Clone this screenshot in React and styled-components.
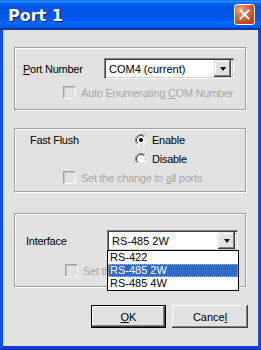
import React from 'react';
import styled, { createGlobalStyle } from 'styled-components';

const Global = createGlobalStyle`
  html, body { margin: 0; padding: 0; }
  body {
    width: 261px; height: 350px; overflow: hidden;
    font-family: "Liberation Sans", Arial, sans-serif;
    font-size: 11px; color: #000;
  }
`;

const FACE = '#e2e2e2';

const Window = styled.div`
  width: 261px; height: 350px; box-sizing: border-box;
  display: flex; flex-direction: column;
`;

const TitleBar = styled.div`
  height: 30px; flex: none; display: flex; align-items: center;
  justify-content: space-between; padding: 0 6px 0 8px; box-sizing: border-box;
  background: linear-gradient(to bottom,
    #0058ee 0%, #3593ff 4%, #288eff 6%, #127dff 8%, #036ffc 10%,
    #0262ee 14%, #0057e5 20%, #0054e3 24%, #0055eb 56%, #005bf5 66%,
    #026afe 76%, #0062ef 86%, #0052d6 92%, #0040ab 94%, #003092 100%);
`;

const Title = styled.div`
  font-family: "DejaVu Sans", sans-serif; font-weight: bold; font-size: 16px;
  color: #fff; text-shadow: 1px 1px 0 #0a1883; margin-top: 1px;
`;

const CloseButton = styled.div`
  width: 21px; height: 21px; box-sizing: border-box; border: 1px solid #fff;
  border-radius: 3px; display: flex; align-items: center; justify-content: center;
  background: radial-gradient(circle at 30% 25%, #f0a080 0%, #e06a45 35%, #cc4418 75%, #b83a10 100%);
  margin-top: -1px;
`;

const Frame = styled.div`
  flex: 1; display: flex; padding: 0 3px 4px 3px;
  background: linear-gradient(to right, #0a3fd7 0, #1660ea 1px, #0a3fd7 3px, #0a3fd7 calc(100% - 3px), #1660ea calc(100% - 2px), #0a2fb0 100%);
  box-shadow: inset 0 -1px 0 #0a2fb0;
`;

const Client = styled.div`
  flex: 1; background: ${FACE}; display: flex; flex-direction: column;
  padding: 17px 12px 0 11px;
`;

const Group = styled.div`
  box-sizing: border-box; height: ${p => p.$h}px; margin-top: ${p => p.$mt || 0}px;
  border: 1px solid #a0a0a0; box-shadow: inset 1px 1px 0 #fff, 1px 1px 0 #fff;
  display: flex; flex-direction: column;
  padding: ${p => p.$pt}px 0 0 ${p => p.$pl}px;
  position: relative;
`;

const Row = styled.div`
  display: flex; align-items: center; height: ${p => p.$h || 13}px;
  margin-top: ${p => p.$mt || 0}px; margin-left: ${p => p.$ml || 0}px;
`;

const Label = styled.div`
  width: ${p => (p.$w ? `${p.$w}px` : 'auto')}; flex: none; white-space: nowrap;
  letter-spacing: -0.25px;
  overflow: ${p => (p.$clip ? 'hidden' : 'visible')};
  color: ${p => (p.$disabled ? '#a8a8a8' : '#000')};
`;

const U = styled.span` text-decoration: underline; `;

const Combo = styled.div`
  position: relative; width: ${p => p.$w}px; height: 21px; box-sizing: border-box;
  background: #fff; display: flex; align-items: center;
  border-top: 1px solid #808080; border-left: 1px solid #808080;
  border-right: 1px solid #fff; border-bottom: 1px solid #fff;
  box-shadow: inset 1px 1px 0 #404040, inset -1px -1px 0 #d4d0c8;
  padding: 2px;
`;

const ComboText = styled.div`
  flex: 1; padding-left: 2px; font-size: 11px; white-space: nowrap;
`;

const ComboButton = styled.div`
  width: 17px; height: 17px; box-sizing: border-box; flex: none;
  background: ${FACE}; display: flex; align-items: center; justify-content: center;
  box-shadow: inset -1px -1px 0 #404040, inset 1px 1px 0 ${FACE}, inset -2px -2px 0 #808080, inset 2px 2px 0 #fff;
`;

const Arrow = styled.div`
  width: 0; height: 0; border-left: 3.5px solid transparent; border-right: 3.5px solid transparent;
  border-top: 4px solid #000; margin-top: 1px;
`;

const DropList = styled.div`
  position: absolute; top: 100%; left: -1px; width: 132px; box-sizing: border-box;
  border: 1px solid #000; background: #fff; z-index: 5;
`;

const ListItem = styled.div`
  height: 13px; line-height: 13px; padding-left: 2px; font-size: 11px; box-sizing: border-box;
  background: ${p => (p.$sel ? '#316ac5' : '#fff')};
  color: ${p => (p.$sel ? '#fff' : '#000')};
  outline: ${p => (p.$sel ? '1px dotted #e8d070' : 'none')};
  outline-offset: -1px;
`;

const CheckBox = styled.div`
  width: 13px; height: 13px; box-sizing: border-box; flex: none; margin-right: 5px;
  background: ${FACE};
  border-top: 1px solid #a0a0a0; border-left: 1px solid #a0a0a0;
  border-right: 1px solid #fff; border-bottom: 1px solid #fff;
  box-shadow: inset 1px 1px 0 #c4c4c4;
`;

const Radio = ({ checked }) => (
  <svg width="12" height="12" viewBox="0 0 12 12" style={{ flex: 'none', marginRight: 5 }}>
    <circle cx="6" cy="6" r="5.5" fill="#fff" />
    <path d="M2.1 9.9 A5.5 5.5 0 0 1 9.9 2.1" stroke="#808080" fill="none" />
    <path d="M9.9 2.1 A5.5 5.5 0 0 1 2.1 9.9" stroke="#fff" fill="none" />
    <path d="M2.8 9.2 A4.5 4.5 0 0 1 9.2 2.8" stroke="#404040" fill="none" />
    <path d="M9.2 2.8 A4.5 4.5 0 0 1 2.8 9.2" stroke="#d4d0c8" fill="none" />
    {checked && <circle cx="6" cy="6" r="2" fill="#000" />}
  </svg>
);

const ButtonRow = styled.div`
  display: flex; justify-content: flex-end; gap: 6px; margin-top: 18px; margin-right: -2px;
`;

const Button = styled.div`
  width: ${p => p.$w}px; height: 23px; box-sizing: border-box; background: ${FACE};
  display: flex; align-items: center; justify-content: center; font-size: 11px;
  border: ${p => (p.$default ? '1px solid #000' : 'none')};
  box-shadow: inset -1px -1px 0 #404040, inset 1px 1px 0 #fff, inset -2px -2px 0 #808080;
`;

export default function App() {
  return (
    <>
      <Global />
      <Window>
        <TitleBar>
          <Title>Port 1</Title>
          <CloseButton>
            <svg width="11" height="11" viewBox="0 0 11 11">
              <path d="M1.5 1.5 L9.5 9.5 M9.5 1.5 L1.5 9.5" stroke="#fff" strokeWidth="2.2" strokeLinecap="square" />
            </svg>
          </CloseButton>
        </TitleBar>
        <Frame>
          <Client>
            <Group $h={63} $pt={10} $pl={8}>
              <Row $h={21}>
                <Label $w={81}><U>P</U>ort Number</Label>
                <Combo $w={130}>
                  <ComboText>COM4 (current)</ComboText>
                  <ComboButton><Arrow /></ComboButton>
                </Combo>
              </Row>
              <Row $mt={7} $ml={40}>
                <CheckBox />
                <Label $disabled>Auto Enumerating <U>C</U>OM Number</Label>
              </Row>
            </Group>

            <Group $h={64} $mt={18} $pt={4} $pl={15}>
              <Row>
                <Label $w={105}>Fast Flush</Label>
                <Radio checked />
                <Label>Enable</Label>
              </Row>
              <Row $mt={6} $ml={105}>
                <Radio />
                <Label>Disable</Label>
              </Row>
              <Row $mt={6} $ml={33}>
                <CheckBox />
                <Label $disabled>Set the change to <U>a</U>ll ports</Label>
              </Row>
            </Group>

            <Group $h={74} $mt={21} $pt={16} $pl={11}>
              <Row $h={21}>
                <Label $w={81}>Interface</Label>
                <Combo $w={131}>
                  <ComboText>RS-485 2W</ComboText>
                  <ComboButton><Arrow /></ComboButton>
                  <DropList>
                    <ListItem>RS-422</ListItem>
                    <ListItem $sel>RS-485 2W</ListItem>
                    <ListItem>RS-485 4W</ListItem>
                  </DropList>
                </Combo>
              </Row>
              <Row $mt={13} $ml={39}>
                <CheckBox />
                <Label $disabled $clip $w={24}>Set the change to all ports</Label>
              </Row>
            </Group>

            <ButtonRow>
              <Button $w={75} $default><U>O</U>K</Button>
              <Button $w={76}>Cance<U>l</U></Button>
            </ButtonRow>
          </Client>
        </Frame>
      </Window>
    </>
  );
}
